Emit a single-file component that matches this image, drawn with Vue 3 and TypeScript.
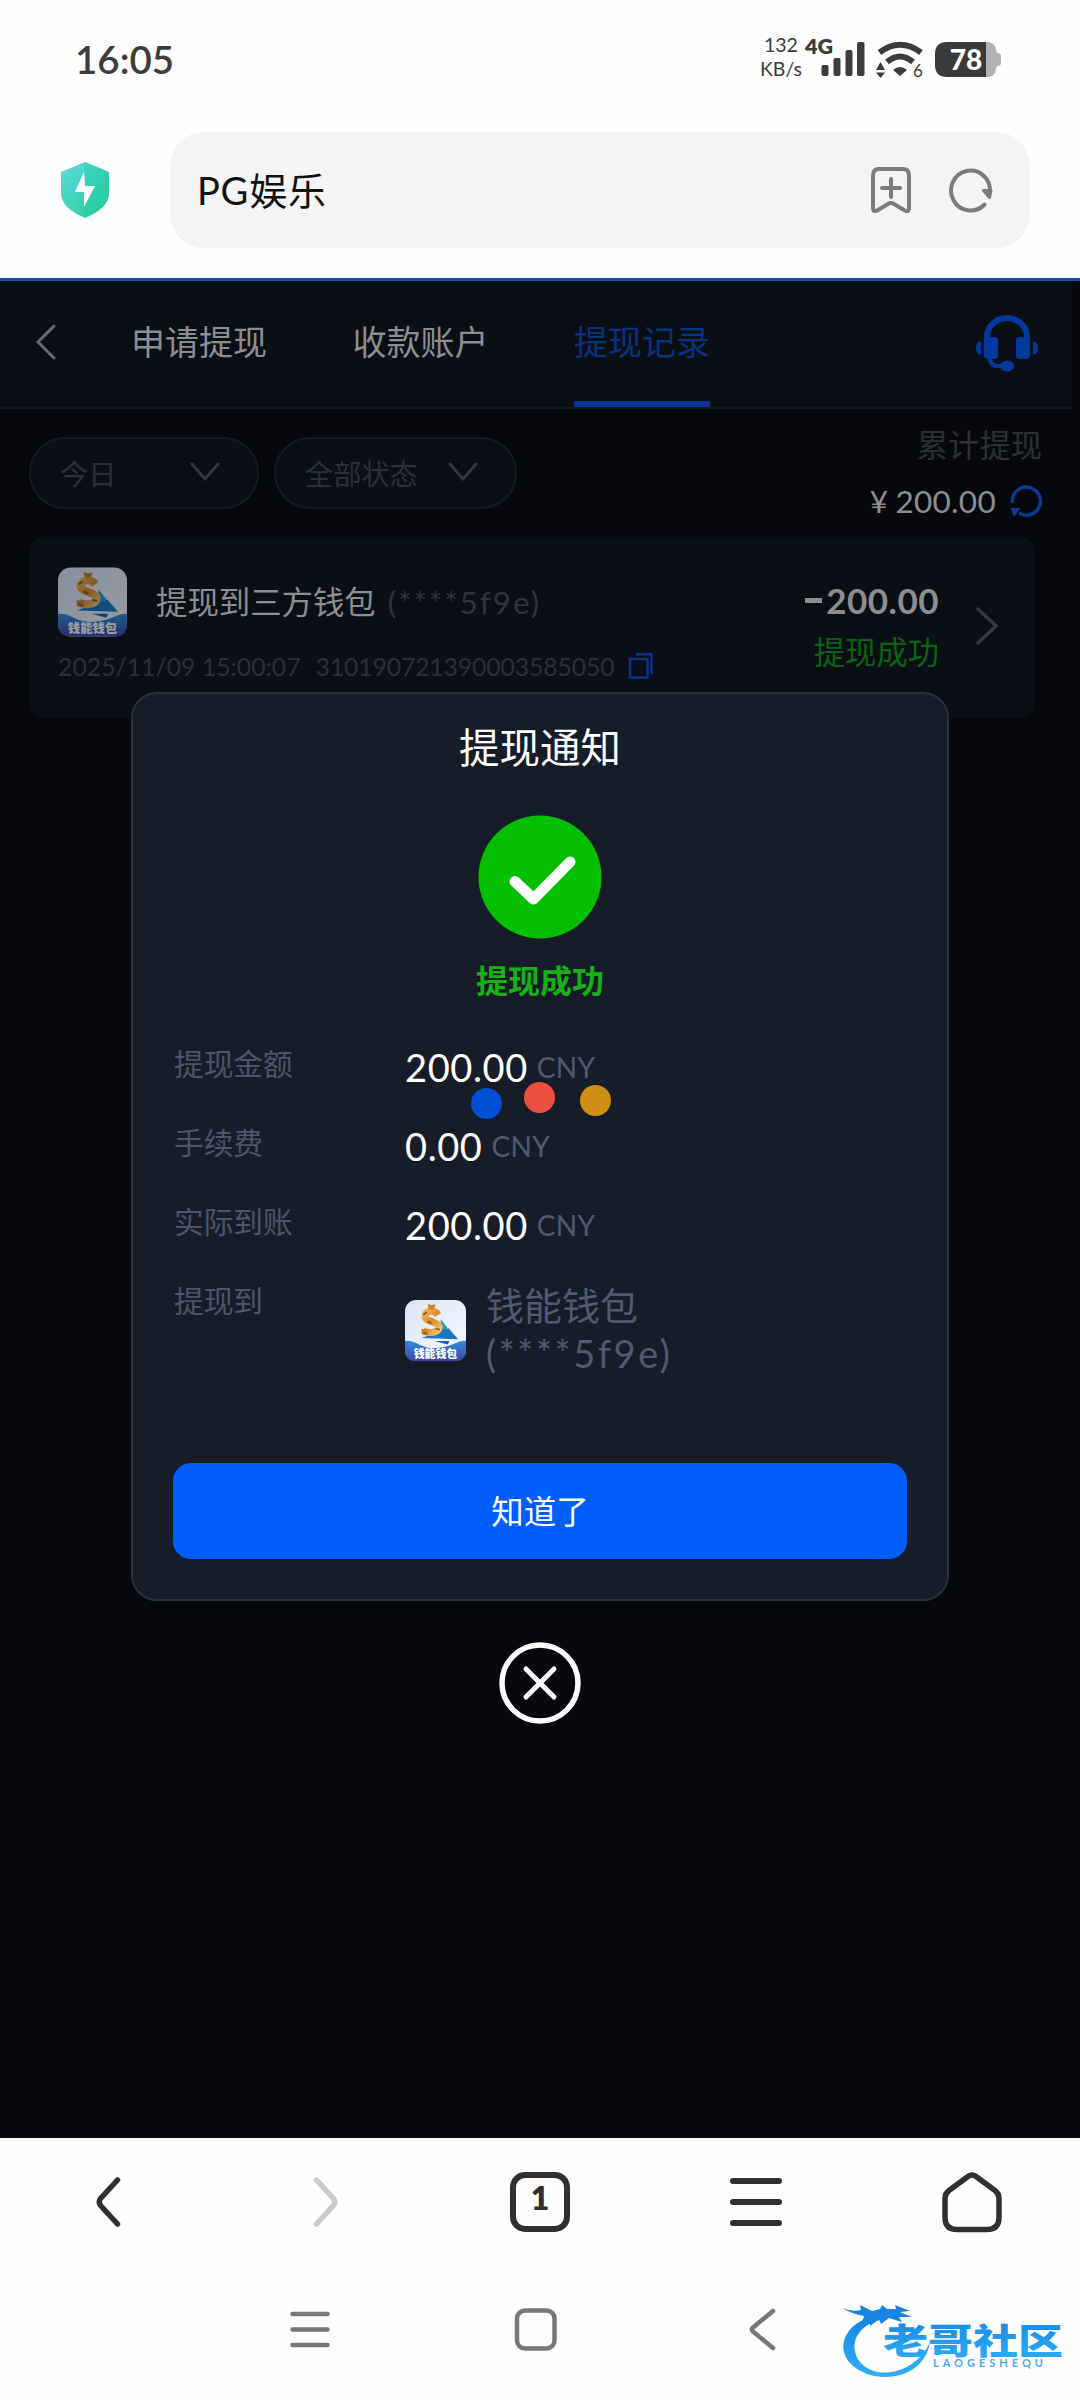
<script setup lang="ts">
import { ref } from 'vue'

interface Detail {
  label: string
  amount: string
}

const tabs = ['申请提现', '收款账户', '提现记录']
const activeTab = ref(2)
const showNotice = ref(true)

const details: Detail[] = [
  { label: '提现金额', amount: '200.00' },
  { label: '手续费', amount: '0.00' },
  { label: '实际到账', amount: '200.00' }
]
</script>

<template>
  <div class="phone">
    <!-- 钱包 logo -->
    <svg class="defs" width="0" height="0">
      <defs>
        <linearGradient id="sky" x1="0" y1="0" x2="1" y2="1">
          <stop offset="0" stop-color="#dce6f9" />
          <stop offset="1" stop-color="#f6f9ff" />
        </linearGradient>
        <linearGradient id="sea" x1="0" y1="0" x2="0" y2="1">
          <stop offset="0" stop-color="#2f8ce0" />
          <stop offset="1" stop-color="#3a46a4" />
        </linearGradient>
        <linearGradient id="gold" x1="0" y1="0" x2="1" y2="1">
          <stop offset="0" stop-color="#f0b658" />
          <stop offset="0.5" stop-color="#d98a26" />
          <stop offset="1" stop-color="#f4c46c" />
        </linearGradient>
        <linearGradient id="shield" x1="0" y1="0" x2="1" y2="1">
          <stop offset="0" stop-color="#5ddcd6" />
          <stop offset="1" stop-color="#27cc9c" />
        </linearGradient>
        <linearGradient id="dragon" x1="0" y1="0" x2="0" y2="1">
          <stop offset="0" stop-color="#1484e6" />
          <stop offset="1" stop-color="#2fb0f8" />
        </linearGradient>
        <symbol id="wallet" viewBox="0 0 70 70">
          <rect width="70" height="70" rx="13" fill="url(#sky)" />
          <path d="M41 22l8 10-8 7z" fill="#2f9bc4" />
          <path d="M19 43.500l31-11 11 12.500z" fill="#1976c0" />
          <path d="M34 47h17l-2 4z" fill="#2358a6" />
          <path d="M38 17c-4-6-14-5-15 1-1 8 17 6 16 14-1 6-11 6-18 4" fill="none" stroke="url(#gold)" stroke-width="8" />
          <path d="M26 4l4 2 5-1-2 6h-6z M19 33l7 1 1 6-8-1z" fill="#c98226" />
          <path d="M21 17l4-3M26 24l4 3M35 33l5 1M21 37l4 2" stroke="#8e5a26" stroke-width="2" />
          <path d="M0 47q7-1 16 4t21 4 20-5 13-3v10q0 13-13 13H13Q0 70 0 57z" fill="url(#sea)" />
          <text x="35" y="66.500" text-anchor="middle" class="wallet-text">钱能钱包</text>
        </symbol>
      </defs>
    </svg>

    <div class="status-bar">
      <span class="clock">16:05</span>
      <div class="status-icons">
        <div class="speed"><span>132</span><span>KB/s</span></div>
        <svg class="signal" width="60" height="42" viewBox="0 0 60 42">
          <text x="0" y="17" class="net">4G</text>
          <g fill="#3c3c3c">
            <rect x="16.500" y="28" width="7" height="11" rx="2" />
            <rect x="28.500" y="21" width="7" height="18" rx="2" />
            <rect x="40.500" y="13" width="7" height="26" rx="2" />
            <rect x="52" y="5" width="7.500" height="34" rx="2" />
          </g>
        </svg>
        <svg class="wifi" width="48" height="42" viewBox="0 0 48 42">
          <g fill="none" stroke="#3c3c3c" stroke-width="6">
            <path d="M3.500 15.500Q24 0 45 15.500" />
            <path d="M11 25q13-11 26 0" />
          </g>
          <path d="M17 33q7-6 14 0l-7 6z M0 33l4.500-8 4.500 8z M0 35.500h9L4.500 41z" fill="#3c3c3c" />
          <text x="37" y="40" class="wifi-gen">6</text>
        </svg>
        <svg class="battery" width="66" height="36" viewBox="0 0 66 36">
          <path d="M50 0h2q8 0 9 8l1 3q4 0 4 3v7q0 3-4 3l-1 3q-1 8-9 8h-2z" fill="#b2b2b2" />
          <path d="M12 0h39v35H12Q0 35 0 23V12Q0 0 12 0z" fill="#3a3a3a" />
          <text x="31" y="28" text-anchor="middle" class="battery-text">78</text>
        </svg>
      </div>
    </div>

    <div class="address-row">
      <svg class="shield" width="50" height="58" viewBox="0 0 50 58">
        <path d="M25 1l24 10v21q0 15-24 25Q1 47 1 32V11z" fill="url(#shield)" />
        <path d="M25 1l24 10v21q0 15-24 25z" fill="#1cc8a6" opacity="0.3" />
        <path d="M24 11L15 31h9v15l11-21H25z" fill="#fff" />
      </svg>
      <div class="address">
        <span class="site">PG娱乐</span>
        <svg width="42" height="48" viewBox="0 0 42 48" fill="none" stroke="#7b7b7b" stroke-width="4" stroke-linecap="round" stroke-linejoin="round">
          <path d="M9 3h24q6 0 6 7v32q0 5-5 2l-10-6q-3-2-6 0l-10 6q-5 3-5-2V10q0-7 6-7z M21 13v18 M12 22h18" />
        </svg>
        <svg width="44" height="46" viewBox="0 0 44 46" fill="none" stroke="#7b7b7b" stroke-width="4" stroke-linecap="round">
          <path d="M35.500 37.500A19.500 20 0 1 1 41 25" />
          <path d="M34.500 23.500h7.500l-1.500 7z" fill="#7b7b7b" stroke-width="3" stroke-linejoin="round" />
        </svg>
      </div>
    </div>

    <main class="page">
      <header class="tab-bar">
        <svg class="back" width="22" height="38" viewBox="0 0 22 38">
          <path d="M19 3L3 19l16 16" fill="none" stroke="#666a71" stroke-width="3" stroke-linecap="round" />
        </svg>
        <nav class="tabs">
          <span v-for="(tab, i) in tabs" :key="tab" class="tab" :class="{ active: i === activeTab }" @click="activeTab = i">{{ tab }}</span>
        </nav>
        <svg class="service" width="62" height="57" viewBox="0 0 62 57" fill="#03399c">
          <path d="M11 25v-3a20 19 0 0 1 40 0v3" fill="none" stroke="#03399c" stroke-width="6" />
          <path d="M8 22h11q3 0 3 3v16q0 3-3 3h-7q-4 0-4-4z M54 22H43q-3 0-3 3v16q0 3 3 3h7q4 0 4-4z" />
          <path d="M5 26v14q-5-1-5-7t5-7z M57 26v14q5-1 5-7t-5-7z" />
          <path d="M14 42q0 9 8 9h6" fill="none" stroke="#03399c" stroke-width="4" />
          <ellipse cx="31" cy="51" rx="7" ry="5.500" />
        </svg>
      </header>

      <section class="filters">
        <div class="pill day">
          <span>今日</span>
          <svg width="32" height="22" viewBox="0 0 32 22"><path d="M3 3l13 15L29 3" /></svg>
        </div>
        <div class="pill state">
          <span>全部状态</span>
          <svg width="32" height="22" viewBox="0 0 32 22"><path d="M3 3l13 15L29 3" /></svg>
        </div>
        <div class="total">
          <span class="total-label">累计提现</span>
          <div class="total-value">
            <span class="yen">¥</span><span>200.00</span>
            <svg width="34" height="36" viewBox="0 0 34 36">
              <path d="M3.500 20A14 14 0 1 1 10 30" fill="none" stroke="#083a94" stroke-width="3.500" />
              <path d="M1.500 25h10L5 34z" fill="#083a94" />
            </svg>
          </div>
        </div>
      </section>

      <article class="record">
        <div class="record-main">
          <div class="record-title">
            <svg class="record-logo" width="69" height="70"><use href="#wallet" /></svg>
            <span class="record-name">提现到三方钱包</span>
            <span class="record-tail">(****5f9e)</span>
          </div>
          <div class="record-meta">
            <span class="date">2025/11/09 15:00:07</span>
            <span class="order">310190721390003585050</span>
            <svg width="26" height="28" viewBox="0 0 26 28" fill="none" stroke="#08338a" stroke-width="2.500">
              <path d="M2 7h17.500v18.500H2z M8 2.300h15.500v20" />
            </svg>
          </div>
        </div>
        <div class="record-side">
          <span class="record-amount"><i class="minus"></i>200.00</span>
          <span class="record-status">提现成功</span>
        </div>
        <svg class="record-arrow" width="26" height="40" viewBox="0 0 26 40">
          <path d="M3 3l18 17L3 37" fill="none" stroke="#343843" stroke-width="3.500" stroke-linecap="round" />
        </svg>
      </article>
    </main>

    <div v-if="showNotice" class="overlay">
      <div class="dialog">
        <h2 class="dialog-title">提现通知</h2>
        <svg class="tick" width="124" height="124" viewBox="0 0 124 124">
          <circle cx="62" cy="62" r="61.500" fill="#04bf00" />
          <path d="M37 66.500L55.500 84 92 47" fill="none" stroke="#fff" stroke-width="11" stroke-linecap="round" stroke-linejoin="round" />
        </svg>
        <p class="dialog-status">提现成功</p>
        <div class="details">
          <div v-for="d in details" :key="d.label" class="detail">
            <span class="label">{{ d.label }}</span>
            <span class="value">{{ d.amount }}</span>
            <span class="unit">CNY</span>
          </div>
          <div class="detail target">
            <span class="label">提现到</span>
            <svg class="target-logo" width="61" height="61"><use href="#wallet" /></svg>
            <div class="target-name"><span>钱能钱包</span><span class="account">(****5f9e)</span></div>
          </div>
        </div>
        <button class="confirm">知道了</button>
      </div>
      <svg class="close" width="82" height="82" viewBox="0 0 82 82" fill="none" stroke="#fff" stroke-linecap="round" @click="showNotice = false">
        <circle cx="41" cy="41" r="38" stroke-width="5.500" />
        <path d="M27 27l28 28M55 27L27 55" stroke-width="5" />
      </svg>
      <!-- 加载中的三个圆点 -->
      <div class="loading"><i class="blue"></i><i class="red"></i><i class="yellow"></i></div>
    </div>

    <footer class="browser-bar">
      <svg viewBox="0 0 64 64"><path d="M41.500 10L25 28q-3.500 4 0 8l16.500 18" stroke="#303030" /></svg>
      <svg viewBox="0 0 64 64"><path d="M24.500 10L41 28q3.500 4 0 8L24.500 54" stroke="#cacaca" /></svg>
      <svg viewBox="0 0 64 64">
        <rect x="5" y="5" width="54" height="54" rx="12" stroke="#303030" stroke-width="6" />
        <text x="32" y="40" text-anchor="middle" class="tab-count">1</text>
      </svg>
      <svg viewBox="0 0 64 64"><path d="M9 11h46M9 32h46M9 53h46" stroke="#303030" stroke-width="6" /></svg>
      <svg viewBox="0 0 64 64"><path d="M28 6.500q4-3 8 0l19 14q4 3 4 8v19q0 12-12 12H17Q5 59.500 5 47.500v-19q0-5 4-8z" stroke="#303030" stroke-width="5.500" /></svg>
    </footer>

    <div class="system-bar">
      <svg viewBox="0 0 48 48"><path d="M6.500 9h35M6.500 24.500h35M6.500 40h35" /></svg>
      <svg viewBox="0 0 48 48"><rect x="5" y="5.500" width="37.500" height="38" rx="8" /></svg>
      <svg viewBox="0 0 48 48"><path d="M36 6L16 22.500q-2.500 2 0 4L36 43" /></svg>
    </div>

    <svg class="watermark" width="240" height="90" viewBox="0 0 240 90">
      <path d="M42 15C8 18-7 46 11 64c22 22 73 17 79-22-12 29-52 41-70 20-12-16-4-36 20-42z" fill="url(#dragon)" />
      <path d="M2 8q10 4 19 2l-1-5 12 6 8-2 2-4 5 4 9 0-1-4 15 6-10 1 12 5-13 0 3 5-13-4-8 6-2-5-9 7 0-7-8 4 2-7q-12-2-22-8z" fill="#1685e4" />
      <text x="43" y="54" class="mark-cn" textLength="180" lengthAdjust="spacingAndGlyphs">老哥社区</text>
      <text x="93" y="67" class="mark-en" textLength="110">LAOGESHEQU</text>
    </svg>
  </div>
</template>

<style>
body {
  background: #fff;
}
</style>

<style scoped>
.phone {
  position: relative;
  width: 1080px;
  height: 2400px;
  overflow: hidden;
  background: #fefefe;
  font-family: Lato, 'Noto Sans CJK SC', sans-serif;
  display: flex;
  flex-direction: column;
}

svg {
  flex: none;
  overflow: visible;
}

.defs {
  position: absolute;
}

.wallet-text {
  font-family: 'Noto Sans CJK SC', sans-serif;
  font-weight: 900;
  font-size: 12.5px;
  fill: #fff;
}

/* 状态栏 */
.status-bar {
  height: 132px;
  box-sizing: border-box;
  padding: 33px 79px 0 75px;
  display: flex;
  justify-content: space-between;
}

.clock {
  font-size: 38.5px;
  line-height: 53px;
  font-weight: 600;
  color: #3c3c3c;
}

.status-icons {
  display: flex;
  color: #3c3c3c;
}

.speed {
  display: flex;
  flex-direction: column;
  align-items: center;
  font-size: 19.5px;
  line-height: 24px;
  margin-right: 3px;
  white-space: nowrap;
}

.signal {
  margin: 4px 0 0;
}

.net {
  font-size: 21.5px;
  font-weight: 800;
  fill: #3c3c3c;
}

.wifi {
  margin: 4px 0 0 11px;
}

.wifi-gen {
  font-size: 17px;
  fill: #3c3c3c;
}

.battery {
  margin: 9px 0 0 11px;
}

.battery-text {
  font-size: 28px;
  font-weight: 900;
  fill: #fff;
}

/* 地址栏 */
.address-row {
  height: 146px;
  box-sizing: border-box;
  padding: 0 50px 0 60px;
  display: flex;
  align-items: flex-start;
}

.shield {
  margin-top: 29px;
}

.address {
  width: 860px;
  height: 116px;
  margin-left: 60px;
  box-sizing: border-box;
  padding: 0 37px 0 27px;
  border-radius: 34px;
  background: #f4f4f4;
  display: flex;
  align-items: center;
  gap: 37px;
}

.site {
  flex: 1;
  font-size: 38px;
  line-height: 56px;
  letter-spacing: 0.8px;
  color: #111;
}

/* 网页 */
.page {
  height: 1860px;
  box-sizing: border-box;
  border-top: 3px solid #1c4cae;
  background: #07080d;
}

.tab-bar {
  width: 1072px;
  height: 128px;
  box-sizing: border-box;
  padding: 0 34px 0 35px;
  border-bottom: 2px solid #14191f;
  background: #0a0f16;
  display: flex;
}

.back {
  margin-top: 42px;
}

.tabs {
  display: flex;
  gap: 85.500px;
  margin-left: 74px;
}

.tab {
  height: 126px;
  box-sizing: border-box;
  width: 136px;
  line-height: 121px;
  font-size: 34px;
  color: #8d8e90;
  white-space: nowrap;
}

.tab.active {
  color: #08337f;
  background: linear-gradient(#053691, #053691) bottom / 100% 6px no-repeat;
}

.service {
  margin: 34px 0 0 auto;
}

.filters {
  height: 128px;
  box-sizing: border-box;
  padding: 28px 38px 0 29px;
  display: flex;
  align-items: flex-start;
}

.pill {
  height: 72px;
  box-sizing: border-box;
  padding: 0 36px 2px 29px;
  border: 2px solid #151b23;
  border-radius: 36px;
  background: #0a0e15;
  color: #2a303b;
  font-size: 28.2px;
  display: flex;
  align-items: center;
  justify-content: space-between;
}

.pill path {
  fill: none;
  stroke: #303642;
  stroke-width: 3;
  stroke-linecap: round;
}

.day {
  width: 230px;
}

.state {
  width: 243px;
  margin-left: 15px;
}

.total {
  margin: -18px 0 0 auto;
  display: flex;
  flex-direction: column;
  align-items: flex-end;
}

.total-label {
  font-size: 31.3px;
  line-height: 52px;
  color: #2c3036;
}

.total-value {
  display: flex;
  align-items: center;
  height: 60px;
  margin-right: -1px;
  font-size: 31.5px;
  letter-spacing: 0.3px;
  color: #8d8e90;
}

.yen {
  margin-right: 7px;
}

.total-value svg {
  margin-left: 13px;
}

.record {
  width: 1006px;
  height: 181px;
  margin-left: 29px;
  box-sizing: border-box;
  padding: 30px 34px 0 29px;
  border-radius: 15px;
  background: #0a0f15;
  display: flex;
}

.record-title {
  display: flex;
  height: 70px;
  line-height: 70px;
  font-size: 31.4px;
  white-space: nowrap;
}

.record-logo {
  opacity: 0.6;
}

.record-name {
  margin-left: 29px;
  color: #8d8e90;
}

.record-tail {
  margin-left: 12px;
  color: #30343c;
  letter-spacing: 2px;
}

.record-meta {
  display: flex;
  align-items: center;
  height: 58px;
  font-size: 24.8px;
  color: #2b2f37;
  white-space: nowrap;
}

.order {
  margin: 0 14px 0 15px;
  letter-spacing: -0.15px;
}

.record-side {
  margin-left: auto;
  display: flex;
  flex-direction: column;
  align-items: flex-end;
}

.record-amount {
  display: flex;
  align-items: center;
  height: 66px;
  font-size: 35px;
  font-weight: 700;
  letter-spacing: 0.5px;
  color: #8d8e90;
}

.minus {
  width: 17px;
  height: 5px;
  margin-right: 4px;
  background: #8d8e90;
}

.record-status {
  font-size: 31.3px;
  line-height: 39px;
  color: #096310;
}

.record-arrow {
  margin: 39px 0 0 36px;
}

/* 弹窗 */
.overlay {
  position: absolute;
  top: 692px;
  left: 131px;
  width: 818px;
  display: flex;
  flex-direction: column;
  align-items: center;
}

.dialog {
  width: 818px;
  height: 909px;
  box-sizing: border-box;
  padding: 0 40px;
  border: 2px solid #29313c;
  border-radius: 26px;
  background: #161d28;
  display: flex;
  flex-direction: column;
  align-items: center;
}

.dialog-title {
  margin: 25px 0 0;
  font-size: 40.5px;
  line-height: 58px;
  font-weight: 400;
  color: #fff;
}

.tick {
  margin-top: 38px;
}

.dialog-status {
  margin: 18px 0 0;
  font-size: 32px;
  line-height: 48px;
  font-weight: 700;
  color: #17b117;
}

.details {
  width: 100%;
  margin-top: 30px;
}

.detail {
  display: flex;
  align-items: flex-start;
  height: 79px;
  line-height: 60px;
}

.label {
  width: 231px;
  margin-left: 1px;
  font-size: 29.7px;
  line-height: 58px;
  color: #4c5568;
}

.value {
  padding-top: 2px;
  font-size: 38px;
  letter-spacing: 0.6px;
  color: #fff;
}

.unit {
  margin-left: 9px;
  padding-top: 2px;
  font-size: 28px;
  letter-spacing: 0.3px;
  color: #505a6e;
}

.target-logo {
  margin-top: 28px;
}

.target-name {
  margin-left: 20px;
  display: flex;
  flex-direction: column;
  font-size: 38px;
  line-height: 48px;
  color: #505a6e;
  padding-top: 9px;
}

.account {
  letter-spacing: 2.5px;
}

.confirm {
  width: 734px;
  height: 96px;
  margin-top: auto;
  margin-bottom: 40px;
  flex: none;
  border: 0;
  padding: 0;
  border-radius: 18px;
  background: #005eff;
  color: #fff;
  font: 32.5px/95px Lato, 'Noto Sans CJK SC', sans-serif;
}

.close {
  margin-top: 41px;
}

.loading {
  position: absolute;
  top: 390px;
  left: 340px;
  display: flex;
  align-items: flex-start;
}

.loading i {
  width: 31px;
  height: 31px;
  border-radius: 50%;
}

.blue {
  margin-top: 6px;
  background: #024fd6;
}

.red {
  margin-left: 22px;
  background: #eb4f40;
}

.yellow {
  margin: 3px 0 0 25px;
  background: #cf8f13;
}

/* 底部 */
.browser-bar {
  height: 128px;
  display: grid;
  grid-template-columns: repeat(5, 1fr);
  justify-items: center;
  align-items: center;
}

.browser-bar svg {
  width: 64px;
  height: 64px;
  fill: none;
  stroke-width: 5.5;
  stroke-linecap: round;
}

.tab-count {
  font-size: 32px;
  font-weight: 800;
  fill: #303030;
}

.system-bar {
  height: 126px;
  box-sizing: border-box;
  padding: 0 295px 0 286px;
  display: flex;
  align-items: center;
  justify-content: space-between;
}

.system-bar svg {
  width: 48px;
  height: 48px;
  fill: none;
  stroke: #777;
  stroke-width: 4.5;
  stroke-linecap: round;
}

.watermark {
  position: absolute;
  left: 840px;
  top: 2300px;
}

.mark-cn {
  font-family: 'Noto Sans CJK SC', sans-serif;
  font-size: 35px;
  font-weight: 900;
  fill: url(#dragon);
}

.mark-en {
  font-size: 11px;
  font-weight: 700;
  fill: #4ba9ea;
}
</style>
